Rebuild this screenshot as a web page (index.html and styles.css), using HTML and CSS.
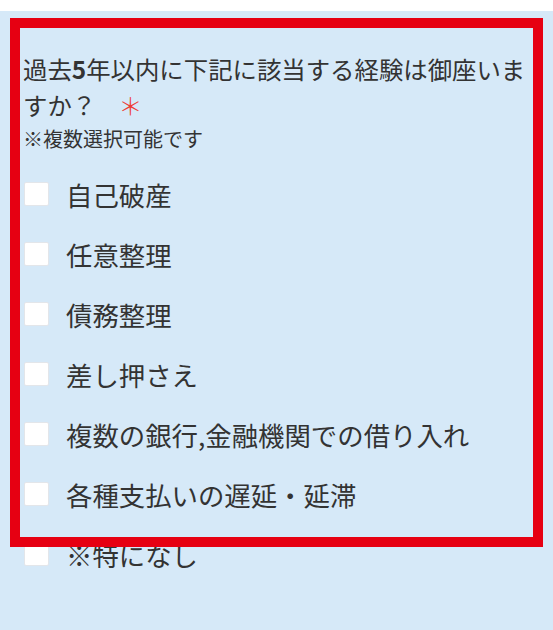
FILE: index.html
```html
<!DOCTYPE html>
<html lang="ja">
<head>
<meta charset="utf-8">
<title>経験</title>
<link rel="stylesheet" href="styles.css">
</head>
<body>
<div class="top-strip"></div>
<main class="form">
  <div class="question">
    <p class="title">過去<strong>5</strong>年以内に下記に該当する経験は御座いますか？<span class="req">＊</span></p>
    <p class="note">※複数選択可能です</p>
  </div>
  <ul class="options">
    <li><label class="option"><input type="checkbox" class="box"><span>自己破産</span></label></li>
    <li><label class="option"><input type="checkbox" class="box"><span>任意整理</span></label></li>
    <li><label class="option"><input type="checkbox" class="box"><span>債務整理</span></label></li>
    <li><label class="option"><input type="checkbox" class="box"><span>差し押さえ</span></label></li>
    <li><label class="option"><input type="checkbox" class="box"><span>複数の銀行,金融機関での借り入れ</span></label></li>
    <li><label class="option"><input type="checkbox" class="box"><span>各種支払いの遅延・延滞</span></label></li>
    <li><label class="option"><input type="checkbox" class="box"><span>※特になし</span></label></li>
  </ul>
  <div class="highlight"></div>
</main>
</body>
</html>
```

FILE: styles.css
```css
html, body {
  margin: 0;
  padding: 0;
  background: #d6e9f8;
}
body {
  font-family: "Noto Sans CJK JP", "Noto Sans", sans-serif;
  color: #333333;
  height: 630px;
  overflow: hidden;
}
.top-strip {
  height: 11px;
  background: #ffffff;
}
.form {
  position: relative;
  background: #d6e9f8;
  padding: 40px 20px 0 23px;
  height: 579px;
}
.question p {
  margin: 0;
}
.title {
  font-size: 24.4px;
  line-height: 36px;
  width: 512px;
}
.title strong {
  font-weight: 700;
}
.req {
  color: #ee3b33;
  font-weight: 300;
  margin-left: 22px;
}
.note {
  font-size: 20px;
  line-height: 32px;
}
.options {
  list-style: none;
  margin: 9px 0 0;
  padding: 0;
}
.option {
  display: flex;
  align-items: center;
  gap: 17px;
  height: 60px;
  font-size: 26.4px;
  padding-left: 1px;
}
.box {
  appearance: none;
  -webkit-appearance: none;
  margin: 0;
  width: 25px;
  height: 24px;
  background: #ffffff;
  border: 1px solid #e3e6ea;
  border-radius: 2px;
  box-sizing: border-box;
  flex: none;
}
.highlight {
  position: absolute;
  left: 10px;
  top: 7px;
  width: 533px;
  height: 529px;
  box-sizing: border-box;
  border: 10px solid #e60012;
  pointer-events: none;
}
```
